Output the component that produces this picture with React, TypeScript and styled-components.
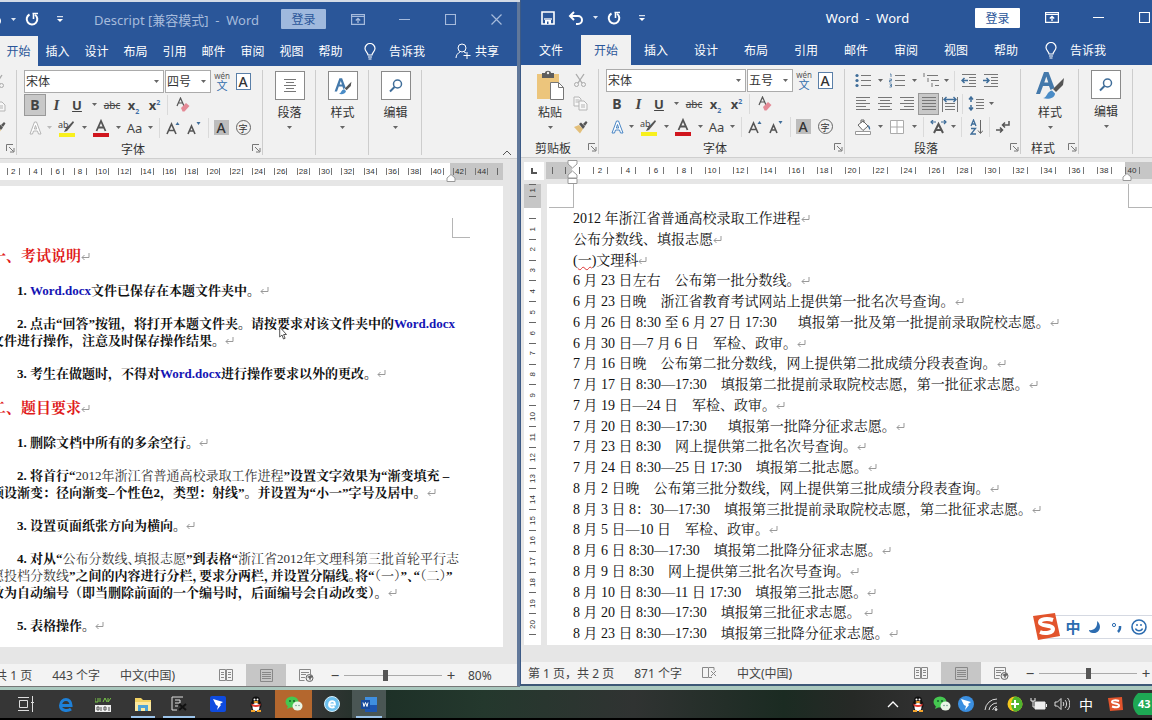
import React from "react";
import styled, { createGlobalStyle, css } from "styled-components";

const BLUE = "#2a5699";
const UI = `"Noto Sans", "Noto Sans CJK SC", sans-serif`;
const DOC = `"Liberation Serif", "Noto Serif CJK SC", "Noto Sans CJK SC", serif`;

const Global = createGlobalStyle`
  * { box-sizing: border-box; }
  html, body { margin: 0; height: 100%; overflow: hidden; }
  body { font-family: ${UI}; font-size: 12px; color: #333; background: #8fa7a0; }
  button, select, input { font: inherit; color: inherit; margin: 0; padding: 0; border: 0; background: none; }
  svg { display: block; flex: none; }
`;

/* ---------- page frame ---------- */
const Screen = styled.div`
  height: 100vh;
  display: flex;
  flex-direction: column;
`;
const Desktop = styled.main`
  flex: 1;
  min-height: 0;
  display: grid;
  grid-template-columns: 520fr 632fr;
  background: linear-gradient(#d3dbe6, #d3dbe6 50%, #a9c7bd);
`;
const Window = styled.section<{ $back?: boolean }>`
  position: relative;
  min-width: 0;
  overflow: hidden;
  ${(p) =>
    p.$back
      ? css`
          margin: 2px 0 1px;
          border-right: 3px solid #61789a;
          border-bottom: 1px solid #777;
        `
      : css`
          margin-bottom: 2px;
          border-left: 1px solid #3c5a86;
          border-bottom: 2px solid #3d5877;
        `}
`;
const Frame = styled.div<{ $offset: number }>`
  height: 100%;
  margin-left: ${(p) => -p.$offset}px;
  display: flex;
  flex-direction: column;
  background: #e6e6e6;
`;

/* ---------- title bar and tabs ---------- */
const TitleBar = styled.header<{ $h: number; $dim?: boolean }>`
  height: ${(p) => p.$h}px;
  flex: none;
  display: flex;
  align-items: center;
  background: ${BLUE};
  color: ${(p) => (p.$dim ? "#a6bbdc" : "#fff")};
`;
const Quick = styled.div`
  display: flex;
  align-items: center;
  padding-left: 16px;
  color: #fff;
`;
const Cell = styled.button<{ $w: number; $on?: boolean }>`
  width: ${(p) => p.$w}px;
  height: 22px;
  flex: none;
  display: flex;
  align-items: center;
  justify-content: center;
  ${(p) => p.$on && "background: #c8c8c8; box-shadow: inset 0 0 0 1px #999;"}
`;
const Title = styled.h1<{ $lead: number }>`
  flex: 1;
  margin: 0;
  padding-left: ${(p) => p.$lead}px;
  font-size: 13px;
  font-weight: 400;
  text-align: center;
  white-space: pre;
`;
const Controls = styled.div<{ $over: number }>`
  display: flex;
  align-items: center;
  flex: none;
  margin-right: ${(p) => -p.$over}px;
`;
const Login = styled.button<{ $dim?: boolean }>`
  width: 45px;
  height: 20px;
  margin-right: 9px;
  border-radius: 1px;
  background: ${(p) => (p.$dim ? "#9fb9de" : "#fff")};
  color: ${BLUE};
`;
const Tabs = styled.nav`
  height: 30px;
  flex: none;
  display: flex;
  background: ${BLUE};
  color: #fff;
`;
const Tab = styled.button<{ $w: number; $on?: boolean }>`
  width: ${(p) => p.$w}px;
  flex: none;
  white-space: nowrap;
  ${(p) => p.$on && `background: #f1f1f1; color: ${BLUE};`}
`;
const Tell = styled.button`
  display: flex;
  align-items: center;
  gap: 13px;
  padding: 0 14px;
  white-space: nowrap;
`;
const Share = styled(Tell)`
  gap: 4px;
  margin-left: auto;
  padding: 0 18px 0 0;
`;

/* ---------- ribbon ---------- */
const Ribbon = styled.div`
  height: 93px;
  flex: none;
  display: flex;
  background: #f1f1f1;
  border-bottom: 1px solid #cfcfcf;
`;
const Group = styled.div<{ $w: number }>`
  width: ${(p) => p.$w}px;
  flex: none;
  display: flex;
  flex-direction: column;
  padding-top: 4px;
  background: linear-gradient(#cdcdcd, #cdcdcd) right 4px / 1px 85px no-repeat;
`;
const GroupBody = styled.div<{ $pad?: number }>`
  height: 69px;
  display: flex;
  padding-left: ${(p) => p.$pad ?? 0}px;
`;
const GroupLabel = styled.div`
  height: 19px;
  display: flex;
  align-items: center;
  span {
    flex: 1;
    text-align: center;
    white-space: nowrap;
  }
`;
const Rows = styled.div`
  display: flex;
  flex-direction: column;
`;
const Row = styled.div`
  height: 23px;
  display: flex;
  align-items: center;
  color: #444;
`;
const Sep = styled.i<{ $w: number }>`
  width: ${(p) => p.$w}px;
  height: 20px;
  background: linear-gradient(#dadada, #dadada) center / 1px 100% no-repeat;
`;
const Combo = styled.label<{ $w: number }>`
  position: relative;
  width: ${(p) => p.$w}px;
  height: 23px;
  margin-right: 1px;
  border: 1px solid #ababab;
  background: #fff;
  select {
    appearance: none;
    width: 100%;
    height: 21px;
    padding-left: 1px;
    color: #333;
  }
  svg {
    position: absolute;
    right: 4px;
    top: 9px;
    pointer-events: none;
  }
`;
const Big = styled.button<{ $w: number }>`
  width: ${(p) => p.$w}px;
  display: flex;
  flex-direction: column;
  align-items: center;
  gap: 5px;
  padding-top: 1px;
  line-height: 16px;
  color: #333;
`;
const Glyph = styled.span<{ $size: number; $bold?: boolean; $italic?: boolean; $serif?: boolean; $line?: string }>`
  font-size: ${(p) => p.$size}px;
  line-height: 18px;
  font-weight: ${(p) => (p.$bold ? 700 : 400)};
  font-style: ${(p) => (p.$italic ? "italic" : "normal")};
  font-family: ${(p) => (p.$serif ? `"Liberation Serif", serif` : `"Noto Sans", sans-serif`)};
  text-decoration: ${(p) => p.$line ?? "none"};
  sub, sup { font-size: 7px; line-height: 0; color: #3f6fa8; }
`;
const BoxIcon = styled.span`
  width: 30px;
  height: 29px;
  display: grid;
  place-items: center;
  border: 1px solid #8a8a8a;
  background: #fff;
`;
const Collapse = styled.button`
  margin: auto 5px 2px auto;
`;

/* ---------- rulers ---------- */
const RulerRow = styled.div<{ $below: number }>`
  flex: none;
  display: flex;
  margin: 4px 0 ${(p) => p.$below}px;
`;
const Ruler = styled.div<{ $dark: number }>`
  position: relative;
  height: 17px;
  flex: 1;
  min-width: 0;
  display: flex;
  background: linear-gradient(to left, #c6c6c6 ${(p) => p.$dark}px, #fff ${(p) => p.$dark}px);
  font: 8px "Liberation Sans", sans-serif;
  color: #333;
`;
const Mark = styled.div<{ $w?: number }>`
  ${(p) => (p.$w ? `flex: none; width: ${p.$w}px;` : "flex: 1;")}
  display: flex;
  align-items: center;
  justify-content: center;
  gap: ${(p) => (p.$w ? 2 : 1)}px;
  &::before, &::after {
    content: "";
    width: 1px;
    height: 7px;
    background: #777;
  }
  span { min-width: 9px; text-align: center; }
`;
const Tick = styled.i`
  flex: 1;
  align-self: center;
  height: 7px;
  background: linear-gradient(#666, #666) center / 1px 100% no-repeat;
`;
const RulerHead = styled.div<{ $w: number; $dark?: boolean }>`
  width: ${(p) => p.$w}px;
  flex: none;
  display: flex;
  background: ${(p) => (p.$dark ? "#c6c6c6" : "transparent")};
`;
const Stop = styled.span<{ $side: "left" | "right"; $at: number; $y: number }>`
  position: absolute;
  ${(p) => p.$side}: ${(p) => p.$at}px;
  top: ${(p) => p.$y}px;
`;
const TabStop = styled.button`
  width: 20px;
  height: 18px;
  margin: 0 2px 0 3px;
  display: grid;
  place-items: center;
  background: #fff;
`;
const VRuler = styled.div`
  width: 17px;
  flex: none;
  margin: 0 6px 0 3px;
  display: flex;
  flex-direction: column;
  overflow: hidden;
  background: linear-gradient(#c6c6c6 24px, #fff 24px);
  font: 8px/17px "Liberation Sans", sans-serif;
  color: #333;
`;
const VMark = styled.div<{ $h?: number }>`
  ${(p) => (p.$h ? `flex: none; height: ${p.$h}px;` : "flex: 1; min-height: 0;")}
  display: flex;
  flex-direction: column;
  align-items: center;
  justify-content: space-between;
  &::before {
    content: "";
    width: 7px;
    height: 1px;
    background: #666;
  }
  span {
    writing-mode: vertical-rl;
    transform: rotate(180deg);
    line-height: 12px;
    margin: auto;
  }
`;

/* ---------- documents ---------- */
const Work = styled.div`
  flex: 1;
  min-height: 0;
  display: flex;
  overflow: hidden;
`;
const Page = styled.article<{ $gutter: number }>`
  flex: 1;
  min-width: 0;
  margin-right: ${(p) => p.$gutter}px;
  display: flex;
  flex-direction: column;
  overflow: hidden;
  background: #fff;
  font-family: ${DOC};
  color: #111;
`;
const Corners = styled.div<{ $h: number; $end: number; $both?: boolean }>`
  height: ${(p) => p.$h}px;
  flex: none;
  display: flex;
  align-items: flex-end;
  justify-content: ${(p) => (p.$both ? "space-between" : "flex-end")};
  padding: 0 ${(p) => p.$end}px 0 2px;
`;
const Corner = styled.i<{ $w: number; $h: number; $edge: "left" | "right" }>`
  width: ${(p) => p.$w}px;
  height: ${(p) => p.$h}px;
  border: 0 solid #b5b5b5;
  border-bottom-width: 1px;
  border-${(p) => p.$edge}-width: 1px;
`;
const Brief = styled.div`
  padding: 8px 0 0 52px;
  font-size: 13px;
  line-height: 17px;
  font-weight: 700;
  white-space: pre;
  h2 {
    margin: 0 0 16px;
    font-size: 15px;
    line-height: 20px;
    color: #e01b1b;
  }
  p { margin: 0 0 16px; text-indent: 26px; }
  b { color: #1414b4; }
  em { font-style: normal; font-weight: 400; color: #333; }
`;
const Tight = styled.span`
  font-feature-settings: "halt";
`;
const Schedule = styled.div`
  flex: 1;
  min-height: 0;
  padding: 1px 0 0 26px;
  display: grid;
  grid-auto-rows: 1fr;
  font-size: 14px;
  line-height: 20px;
  white-space: pre;
  p { margin: 0; min-height: 0; }
  u { text-decoration: underline wavy #d33 1px; }
`;
const Return = styled.svg`
  display: inline-block;
`;

/* ---------- status bar ---------- */
const Status = styled.footer`
  height: 22px;
  flex: none;
  margin-top: 17px;
  display: flex;
  align-items: center;
  padding-left: 7px;
  background: #f3f3f3;
  color: #444;
  white-space: nowrap;
`;
const Info = styled.span`
  margin-right: 20px;
`;
const Views = styled.div`
  display: flex;
  margin-left: auto;
`;
const View = styled.button<{ $on?: boolean }>`
  width: 40px;
  height: 22px;
  display: grid;
  place-items: center;
  background: ${(p) => (p.$on ? "#c6c6c6" : "transparent")};
`;
const Zoom = styled.div<{ $tail: number }>`
  display: flex;
  align-items: center;
  margin-right: ${(p) => p.$tail}px;
  button { width: 18px; font-size: 15px; line-height: 20px; }
  input {
    appearance: none;
    width: 98px;
    height: 20px;
    background: linear-gradient(#aaa, #aaa) center / 100% 1px no-repeat;
  }
  input::-webkit-slider-thumb {
    appearance: none;
    width: 5px;
    height: 11px;
    background: #555;
  }
  output { width: 50px; padding-left: 8px; }
`;

/* ---------- taskbar and overlays ---------- */
const Taskbar = styled.footer`
  height: 32px;
  flex: none;
  display: flex;
  align-items: stretch;
  border-top: 2px solid #a9c7bd;
  border-bottom: 2px solid #000;
  background: linear-gradient(to right, #363636 27%, #1d3027 33%, #24382d 42%, #303332 55%, #1b2b22 68%, #262926 74%, #303030 80%);
`;
const Task = styled.button<{ $w: number; $open?: boolean; $bg?: string }>`
  width: ${(p) => p.$w}px;
  height: 28px;
  flex: none;
  display: grid;
  place-items: center;
  background: ${(p) => p.$bg ?? "transparent"};
  ${(p) => p.$open && "background-image: linear-gradient(#9cc4ea, #9cc4ea); background-size: calc(100% - 8px) 2px; background-position: center bottom; background-repeat: no-repeat;"}
`;
const Tray = styled.div`
  display: flex;
  margin-left: auto;
  color: #fff;
  font-size: 14px;
`;
const ImeBar = styled.div`
  position: absolute;
  right: 0;
  bottom: 45px;
  display: flex;
  align-items: center;
  width: 108px;
  height: 24px;
  padding-left: 17px;
  background: #fff;
  border: 1px solid #d5d9e2;
  border-right: 0;
  color: #2c6cb0;
  button { width: 22px; display: grid; place-items: center; font-size: 15px; line-height: 22px; font-weight: 700; }
  > svg { position: absolute; left: -14px; top: -4px; }
`;
const Pointer = styled.svg`
  position: absolute;
  left: 279px;
  top: 324px;
`;

/* ---------- drawings ---------- */
type SvgP = { w?: number; h?: number; box?: string; children: React.ReactNode; c?: string };
const Ico = ({ w = 16, h = 16, box, c = "currentColor", children }: SvgP) => (
  <svg width={w} height={h} viewBox={box ?? `0 0 ${w} ${h}`} fill="none" stroke={c} aria-hidden="true">
    {children}
  </svg>
);
const Caret = ({ c = "#666" }: { c?: string }) => (
  <svg width="5" height="3" aria-hidden="true"><path d="M0 0h5L2.500 3z" fill={c} /></svg>
);
const Launcher = () => (
  <Cell $w={14} aria-label="更多选项">
    <Ico w={9} h={9} c="#777"><path d="M.5 7V.5H7M3 3l4.500 4.500M8 4v4H4" /></Ico>
  </Cell>
);
const SaveIcon = () => (
  <Ico w={14} h={14}><path d="M1 1h12v12H1z" strokeWidth="1.600" /><path d="M3 8h8" strokeWidth="1.300" /><path d="M4 9h6v4H4z" fill="currentColor" stroke="none" /><path d="M6 10.500h1.500V13H6z" fill={BLUE} stroke="none" /></Ico>
);
const UndoIcon = () => (
  <Ico w={16} h={14} c="currentColor"><path d="M6 1L2 5l4 4M2.500 5H10a4 4 0 010 8H8" strokeWidth="2" /></Ico>
);
const RedoIcon = () => (
  <Ico w={14} h={14}><path d="M4.500 2.500A5.300 5.300 0 1010 2.800" strokeWidth="2" /><path d="M7.500 1.500H13M8.500 1.500V7" strokeWidth="1.600" /></Ico>
);
const CustomIcon = () => (
  <Ico w={6} h={6}><path d="M0 .7h6" /><path d="M0 3h6L3 6z" fill="currentColor" stroke="none" /></Ico>
);
const RibbonIcon = () => (
  <Ico w={14} h={11}><path d="M.6.600h12.800v9.800H.6zM.6 2.500h12.800" strokeWidth="1.200" /><path d="M7 9V4.500M4.800 6.500L7 4.300l2.200 2.200" strokeWidth="1.300" /></Ico>
);
const Bulb = () => (
  <Ico w={12} h={17}><path d="M4 12c0-2.500-3-3.500-3-6.500a5 5 0 0110 0c0 3-3 4-3 6.500zM4 14h4M4.500 16h3" strokeWidth="1.200" /></Ico>
);
const ShareIcon = () => (
  <Ico w={16} h={16}><circle cx="7" cy="5" r="4" /><path d="M1 15c0-3 2-5 4-6M9 9l2 1M12 9v7M8.500 12.500h7" /></Ico>
);
const Scissors = () => (
  <Ico w={14} h={15} c="#aaa"><path d="M3 1l6 9M11 1L5 10" strokeWidth="1.300" /><circle cx="3.500" cy="11.500" r="2" /><circle cx="10.500" cy="11.500" r="2" /></Ico>
);
const CopyIcon = () => (
  <Ico w={15} h={15} c="#b5b5b5"><path d="M1 1h5l2 2v7H1zM2.500 4h4M2.500 6h4" fill="#f8f8f8" /><path d="M6 5h5l3 3v6H6z" fill="#f8f8f8" /><path d="M8 9h4M8 11h4" /></Ico>
);
const Painter = () => (
  <Ico w={15} h={14} c="none"><path d="M1 7l5-2 4 4-3 4.500z" fill="#e3bf7a" /><path d="M6 4l2-1.500 4 4L10 9z" fill="#555" /><path d="M10 4l3-3 1.500 1.500L12 6z" fill="#555" /></Ico>
);
const PasteIcon = () => (
  <Ico w={28} h={30} c="none">
    <path d="M1 4h22v25H1z" fill="#ecc57c" /><path d="M6 3h3c0-3 6-3 6 0h3v5H6z" fill="#5d5d5d" /><circle cx="12" cy="3" r="1.200" fill="#eee" />
    <path d="M14.500 12.500h8l5 5v12h-13z" fill="#fff" stroke="#777" /><path d="M22.500 12.500v5h5" stroke="#777" />
  </Ico>
);
const StyleIcon = ({ s = 1 }: { s?: number }) => (
  <Ico w={30 * s} h={30 * s} box="0 0 30 30" c="none">
    <path d="M1 24L9 2h4.500l6 16-4 2-1.500-4H8l-3 8zM9.300 12.500h4L11.300 6.500z" fill="#4479ab" fillRule="evenodd" />
    <path d="M29 8l-1 7-7 7-3-3z" fill="#555" /><path d="M8 28c4 0 4-7 9-7.500l3 3C20 28 13 30 8 28z" fill="#4a8cc7" />
  </Ico>
);
const Search = () => (
  <Ico w={14} h={14} c="#3f6d99"><circle cx="8.500" cy="5" r="4" strokeWidth="1.500" /><path d="M5.500 8L1 12.500" strokeWidth="2" /></Ico>
);
const Lines = ({ rows, c = "#777" }: { rows: [number, number][]; c?: string }) => (
  <Ico w={16} h={15} c={c}>{rows.map(([a, b], i) => <path key={i} d={`M${a} ${i * 3 + 1.5}H${b}`} />)}</Ico>
);
const ListIcon = ({ kind }: { kind: "dot" | "num" | "multi" }) => (
  <Ico w={17} h={15} c="#777">
    {kind === "multi" ? (
      <path d="M4 2.500h11M8 7.500h8M12 12.500h4M1 0v4M5 5v4M9 10v4" />
    ) : (
      <path d="M6 2.500h10M6 7.500h10M6 12.500h10" />
    )}
    {kind === "dot" && [2.5, 7.5, 12.5].map((y) => <circle key={y} cx="2" cy={y} r="1.600" fill="#3f6d99" stroke="none" />)}
    {kind === "num" && <path d="M1 1h1v3M.5 6h2v1.500h-2V9h2M.5 11h2v3h-2M1 12.500h1" stroke="#3f6d99" strokeWidth=".8" />}
  </Ico>
);
const IndentIcon = ({ out }: { out?: boolean }) => (
  <Ico w={16} h={15} c="#777"><path d="M1 1.500h14M8 4.500h7M8 7.500h7M8 10.500h7M1 13.500h14" /><path d={out ? "M7 7.500H1M3.500 5L1 7.500 3.500 10" : "M0 7.500h6M3.500 5L6 7.500 3.500 10"} stroke="#3f6d99" strokeWidth="1.500" /></Ico>
);
const DistIcon = () => (
  <Ico w={16} h={16} c="#777"><path d="M3 7.500h10M3 10.500h10M3 13.500h10M.5 1v15M15.500 1v15" /><path d="M2 3.500h12M4.500 1L2 3.500 4.500 6M11.500 1L14 3.500 11.500 6" stroke="#3f6d99" strokeWidth="1.400" /></Ico>
);
const SpacingIcon = () => (
  <Ico w={16} h={15} c="#777"><path d="M8 3.500h8M8 6.500h8M8 9.500h8M8 12.500h8" /><path d="M3 1v5M1 3.500L3 1l2 2.500M3 9v5M1 11.500L3 14l2-2.500" stroke="#3f6d99" strokeWidth="1.500" /></Ico>
);
const ShadeIcon = () => (
  <Ico w={17} h={16} c="#666"><path d="M3 6l5-4 5 5-5 4.500zM6 4V1h3v3" fill="#fff" /><path d="M13 6c2 1 2.500 3 2 5-1-1-2-2-2-5z" fill="#3f6d99" stroke="none" /><path d="M.5 12.500h15v3H.5z" fill="#fff" stroke="#999" /></Ico>
);
const BorderIcon = () => (
  <Ico w={14} h={14} c="#aaa"><path d="M.5.500h13v13H.5zM7 .5v13M.5 7h13" fill="#fff" /></Ico>
);
const AsianIcon = () => (
  <Ico w={17} h={14} c="#555"><path d="M4 13l4.500-9 4.500 9M6 10h5" strokeWidth="2" /><path d="M6 2H1M3 0L1 2l2 2M11 2h5M14 0l2 2-2 2" stroke="#3f6d99" strokeWidth="1.200" /></Ico>
);
const SortIcon = () => (
  <Ico w={13} h={16} c="#3f6d99"><path d="M1 7l2.500-6L6 7M2 5h3M1 9.500h4.500L1 15h5" strokeWidth="1.300" /><path d="M10.500 1v13M8 11.500l2.500 3 2.500-3" stroke="#666" /></Ico>
);
const MarksIcon = () => (
  <Ico w={14} h={13} c="#555"><path d="M13 1v4H7M9 2.500L6.500 5 9 7.500M0 10h6M4 7.500L6.500 10 4 12.500" strokeWidth="1.500" /></Ico>
);
const Eraser = () => (
  <Ico w={14} h={15} c="#555"><path d="M1 9l3.500-8L8 9M2.300 6h4.500" strokeWidth="1.200" /><path d="M5 11l5-5 3.500 3-5 5.500H6.500z" fill="#e48a96" stroke="none" /></Ico>
);
const OutlineA = ({ c }: { c: string }) => (
  <Ico w={13} h={14} c={c}><path d="M1 13L5.500 1h2L12 13H9.500l-1-3h-4l-1 3zM5.300 8h2.400L6.500 4.500z" fill="#fff" /></Ico>
);
const Highlighter = () => (
  <svg width="18" height="18" aria-hidden="true"><text x="0" y="9" fontSize="9" fontFamily="Noto Sans" fill="#444">ab</text><path d="M15 2l1 1.500L9 12l-3 1 1.500-3z" fill="#555" /><path d="M1 14h16v4H1z" fill="#f8f01d" /></svg>
);
const ColorA = () => (
  <svg width="16" height="18" aria-hidden="true"><path d="M3.500 12L8 2l4.500 10M5.500 8.500h5" fill="none" stroke="#555" strokeWidth="1.800" /><path d="M0 14h16v4H0z" fill="#d0161e" /></svg>
);
const SizeA = ({ up }: { up?: boolean }) => (
  <Ico w={14} h={14} c="#555"><path d={up ? "M1 13L5.500 3 10 13M2.800 9.500h5.500" : "M1 13l3.500-8L8 13M2.500 10h4"} strokeWidth="1.600" /><path d={up ? "M9.500 4L11.500 1l2 3z" : "M9.500 1h4l-2 3z"} fill="#3f6d99" stroke="none" /></Ico>
);
const PinyinMark = styled.span`
  display: grid;
  justify-items: center;
  font-size: 8px;
  line-height: 8px;
  color: #555;
  b {
    font-size: 11px;
    line-height: 12px;
    font-weight: 400;
    color: #2f6cab;
  }
`;
const CharBox = styled.span<{ $kind: "border" | "shade" | "ring" }>`
  display: grid;
  place-items: center;
  width: 15px;
  height: ${(p) => (p.$kind === "border" ? 17 : 15)}px;
  line-height: 15px;
  font-size: ${(p) => (p.$kind === "ring" ? 9 : 14)}px;
  font-weight: ${(p) => (p.$kind === "ring" ? 400 : 500)};
  color: #333;
  ${(p) => p.$kind === "border" && "border: 1px solid #5a7fa8; background: #fff;"}
  ${(p) => p.$kind === "shade" && "background: #bdbdbd;"}
  ${(p) => p.$kind === "ring" && "border: 1px solid #666; border-radius: 50%;"}
`;
const Cr = () => (
  <Return width="9" height="8" fill="none" stroke="#999" aria-hidden="true"><path d="M8 0v4.500H1M3.500 2L1 4.500 3.500 7" /></Return>
);

/* ---------- ribbon groups ---------- */
const FontGroup = ({ bold }: { bold?: boolean }) => (
  <Group $w={246}>
    <GroupBody $pad={7}>
      <Rows>
        <Row>
          <Combo $w={140}><select aria-label="字体"><option>宋体</option></select><Caret /></Combo>
          <Combo $w={46}><select aria-label="字号"><option>{bold ? "四号" : "五号"}</option></select><Caret /></Combo>
          <Cell $w={20} aria-label="拼音指南"><PinyinMark>wén<b>文</b></PinyinMark></Cell>
          <Cell $w={22} aria-label="字符边框"><CharBox $kind="border">A</CharBox></Cell>
        </Row>
        <Row>
          <Cell $w={22} $on={bold}><Glyph $size={14} $bold>B</Glyph></Cell>
          <Cell $w={21}><Glyph $size={15} $bold $italic $serif>I</Glyph></Cell>
          <Cell $w={20}><Glyph $size={13} $bold $line="underline">U</Glyph></Cell>
          <Cell $w={14} aria-label="下划线样式"><Caret /></Cell>
          <Cell $w={22}><Glyph $size={10} $line="line-through">abc</Glyph></Cell>
          <Cell $w={21}><Glyph $size={13} $bold>x<sub>2</sub></Glyph></Cell>
          <Cell $w={21}><Glyph $size={13} $bold>x<sup>2</sup></Glyph></Cell>
          <Sep $w={4} />
          <Cell $w={28} aria-label="清除格式"><Eraser /></Cell>
        </Row>
        <Row>
          <Cell $w={22} aria-label="文本效果"><OutlineA c={bold ? "#b5b5b5" : "#4a86c5"} /></Cell>
          <Cell $w={7} aria-label="文本效果选项"><Caret c={bold ? "#bbb" : "#666"} /></Cell>
          <Cell $w={28} aria-label="突出显示"><Highlighter /></Cell>
          <Cell $w={7} aria-label="突出显示颜色"><Caret /></Cell>
          <Cell $w={26} aria-label="字体颜色"><ColorA /></Cell>
          <Cell $w={8} aria-label="更多颜色"><Caret /></Cell>
          <Cell $w={25}><Glyph $size={13}>Aa</Glyph></Cell>
          <Cell $w={7} aria-label="更改大小写"><Caret /></Cell>
          <Sep $w={10} />
          <Cell $w={18} aria-label="增大字号"><SizeA up /></Cell>
          <Cell $w={24} aria-label="减小字号"><SizeA /></Cell>
          <Sep $w={4} />
          <Cell $w={22} aria-label="字符底纹"><CharBox $kind="shade">A</CharBox></Cell>
          <Cell $w={22} aria-label="带圈字符"><CharBox $kind="ring">字</CharBox></Cell>
        </Row>
      </Rows>
    </GroupBody>
    <GroupLabel><span>字体</span><Launcher /></GroupLabel>
  </Group>
);

const ClipboardGroup = () => (
  <Group $w={78}>
    <GroupBody $pad={8}>
      <Big $w={42}><PasteIcon />粘贴<Caret /></Big>
      <Rows>
        <Row><Cell $w={18} aria-label="剪切"><Scissors /></Cell></Row>
        <Row><Cell $w={18} aria-label="复制"><CopyIcon /></Cell></Row>
        <Row><Cell $w={18} aria-label="格式刷"><Painter /></Cell></Row>
      </Rows>
    </GroupBody>
    <GroupLabel><span>剪贴板</span><Launcher /></GroupLabel>
  </Group>
);

const F: [number, number] = [1, 15];
const ParagraphGroup = () => (
  <Group $w={176}>
    <GroupBody $pad={7}>
      <Rows>
        <Row>
          <Cell $w={22} aria-label="项目符号"><ListIcon kind="dot" /></Cell><Cell $w={12} aria-label="项目符号库"><Caret /></Cell>
          <Cell $w={22} aria-label="编号"><ListIcon kind="num" /></Cell><Cell $w={12} aria-label="编号库"><Caret /></Cell>
          <Cell $w={22} aria-label="多级列表"><ListIcon kind="multi" /></Cell><Cell $w={8} aria-label="列表库"><Caret /></Cell>
          <Sep $w={9} />
          <Cell $w={20} aria-label="减少缩进"><IndentIcon out /></Cell><Cell $w={24} aria-label="增加缩进"><IndentIcon /></Cell>
        </Row>
        <Row>
          <Cell $w={22} aria-label="左对齐"><Lines rows={[F, [1, 11], F, [1, 11], F]} /></Cell>
          <Cell $w={22} aria-label="居中"><Lines rows={[F, [3, 13], F, [3, 13], F]} /></Cell>
          <Cell $w={22} aria-label="右对齐"><Lines rows={[F, [5, 15], F, [5, 15], F]} /></Cell>
          <Cell $w={21} $on aria-label="两端对齐"><Lines rows={[F, F, F, F, F]} /></Cell>
          <Cell $w={21} aria-label="分散对齐"><DistIcon /></Cell>
          <Sep $w={5} />
          <Cell $w={22} aria-label="行距"><SpacingIcon /></Cell><Cell $w={8} aria-label="行距选项"><Caret /></Cell>
        </Row>
        <Row>
          <Cell $w={22} aria-label="底纹"><ShadeIcon /></Cell><Cell $w={12} aria-label="底纹颜色"><Caret /></Cell>
          <Cell $w={22} aria-label="边框"><BorderIcon /></Cell><Cell $w={12} aria-label="边框选项"><Caret /></Cell>
          <Sep $w={7} />
          <Cell $w={22} aria-label="中文版式"><AsianIcon /></Cell><Cell $w={8} aria-label="版式选项"><Caret /></Cell>
          <Sep $w={8} />
          <Cell $w={22} aria-label="排序"><SortIcon /></Cell>
          <Sep $w={4} />
          <Cell $w={24} aria-label="显示编辑标记"><MarksIcon /></Cell>
        </Row>
      </Rows>
    </GroupBody>
    <GroupLabel><span>段落</span><Launcher /></GroupLabel>
  </Group>
);

const Boxed = ({ label, w, children }: { label: string; w: number; children: React.ReactNode }) => (
  <Group $w={w}>
    <GroupBody><Big $w={w}><BoxIcon>{children}</BoxIcon>{label}<Caret /></Big></GroupBody>
  </Group>
);

const Numbers = ({ to, w }: { to: number; w?: number }) => (
  <>
    {Array.from({ length: to / 2 }, (_, i) => (
      <Mark key={i} $w={w}><span>{i * 2 + 2}</span></Mark>
    ))}
  </>
);
const RightStop = () => (
  <svg width="10" height="8" fill="#fff" stroke="#999" aria-hidden="true"><path d="M1 7.500V4l4-3.500L9 4v3.500z" /></svg>
);

/* ---------- status parts ---------- */
const ReadIcon = () => (
  <Ico w={14} h={12} c="#888"><path d="M.5.500h6v11h-6zM7.500.500h6v11h-6zM2 3.500h3M2 5.500h3M2 8.500h3M9 3.500h3M9 5.500h3M9 8.500h3" /></Ico>
);
const PrintIcon = () => (
  <Ico w={13} h={13} c="#888"><path d="M.5.500h12v12H.5zM2 3.500h9M2 5.500h9M2 7.500h9M2 9.500h9" /></Ico>
);
const WebIcon = () => (
  <Ico w={15} h={13} c="#888"><path d="M.5.500h11v5M.5.500v11h5M2 3.500h8M2 5.500h5M2 8.500h4" /><circle cx="10.500" cy="9" r="3.500" fill="#eee" stroke="#666" /><path d="M8 8l2 1 1 3 1-3 2-1-2-2z" fill="#666" stroke="none" /></Ico>
);
const ProofIcon = () => (
  <Ico w={15} h={12} c="#888"><path d="M.5.500h6v10h-6zM7 .5h5v3M7 10.500h3M9 4l5 5M14 4L9 9" /></Ico>
);
const ViewTools = ({ value, tail, percent }: { value: number; tail: number; percent?: string }) => (
  <>
    <Views>
      <View aria-label="阅读视图"><ReadIcon /></View>
      <View $on aria-label="页面视图"><PrintIcon /></View>
      <View aria-label="Web 版式视图"><WebIcon /></View>
    </Views>
    <Zoom $tail={tail}>
      <button>−</button>
      <input type="range" aria-label="显示比例" min={0} max={100} defaultValue={value} />
      <button>+</button>
      {percent && <output>{percent}</output>}
    </Zoom>
  </>
);

const QuickTools = () => (
  <Quick>
    <Cell $w={22} aria-label="保存"><SaveIcon /></Cell>
    <Cell $w={34} aria-label="撤消"><UndoIcon /></Cell>
    <Caret c="#dfe7f3" />
    <Cell $w={32} aria-label="重复"><RedoIcon /></Cell>
    <Cell $w={24} aria-label="自定义快速访问工具栏"><CustomIcon /></Cell>
  </Quick>
);
const WindowTools = ({ over, dim }: { over: number; dim?: boolean }) => (
  <Controls $over={over}>
    <Login $dim={dim}>登录</Login>
    <Cell $w={46} aria-label="功能区显示选项"><RibbonIcon /></Cell>
    <Cell $w={46} aria-label="最小化"><Ico w={11} h={11}><path d="M0 5.500h11" /></Ico></Cell>
    <Cell $w={46} aria-label="最大化"><Ico w={11} h={11}><path d="M.5.500h10v10H.5z" strokeWidth="1.200" /></Ico></Cell>
    {dim && <Cell $w={46} aria-label="关闭"><Ico w={11} h={11}><path d="M.5.500l10 10M10.500.500l-10 10" strokeWidth="1.200" /></Ico></Cell>}
  </Controls>
);
const TABS = ["插入", "设计", "布局", "引用", "邮件", "审阅", "视图", "帮助"];

const SCHEDULE = [
  "6 月 23 日左右　公布第一批分数线。",
  "6 月 23 日晚　浙江省教育考试网站上提供第一批名次号查询。",
  "6 月 26 日 8:30 至 6 月 27 日 17:30　  填报第一批及第一批提前录取院校志愿。",
  "6 月 30 日—7 月 6 日　军检、政审。",
  "7 月 16 日晚　公布第二批分数线，网上提供第二批成绩分段表查询。",
  "7 月 17 日 8:30—17:30　填报第二批提前录取院校志愿，第一批征求志愿。",
  "7 月 19 日—24 日　军检、政审。",
  "7 月 20 日 8:30—17:30　  填报第一批降分征求志愿。",
  "7 月 23 日 8:30　网上提供第二批名次号查询。",
  "7 月 24 日 8:30—25 日 17:30　填报第二批志愿。",
  "8 月 2 日晚　公布第三批分数线，网上提供第三批成绩分段表查询。",
  "8 月 3 日 8：30—17:30　填报第三批提前录取院校志愿，第二批征求志愿。",
  "8 月 5 日—10 日　军检、政审。",
  "8 月 6 日 8:30—17:30　填报第二批降分征求志愿。",
  "8 月 9 日 8:30　网上提供第三批名次号查询。",
  "8 月 10 日 8:30—11 日 17:30　填报第三批志愿。",
  "8 月 20 日 8:30—17:30　填报第三批征求志愿。 ",
  "8 月 23 日 8:30—17:30　填报第三批降分征求志愿。",
];

const LeftWindow = () => (
  <Window $back>
    <Frame $offset={61}>
      <TitleBar $h={34} $dim>
        <QuickTools />
        <Title $lead={0}>{"Descript [兼容模式]  -  Word"}</Title>
        <WindowTools over={2} dim />
      </TitleBar>
      <Tabs>
        <Tab $w={60}>文件</Tab>
        <Tab $w={39} $on>开始</Tab>
        {TABS.map((t) => <Tab key={t} $w={39}>{t}</Tab>)}
        <Tell><Bulb />告诉我</Tell>
        <Share><ShareIcon />共享</Share>
      </Tabs>
      <Ribbon>
        <ClipboardGroup />
        <FontGroup bold />
        <Boxed w={53} label="段落"><Lines rows={[[2, 14], [4, 12], [2, 14], [4, 12], [2, 14]]} /></Boxed>
        <Boxed w={53} label="样式"><StyleIcon s={0.6} /></Boxed>
        <Boxed w={53} label="编辑"><Search /></Boxed>
        <Collapse aria-label="折叠功能区"><Ico w={10} h={6} c="#555"><path d="M1 5l4-4 4 4" /></Ico></Collapse>
      </Ribbon>
      <RulerRow $below={6}>
        <Ruler $dark={53}>
          <RulerHead $w={63} />
          <Numbers to={44} />
          <RulerHead $w={10}><Tick /></RulerHead>
          <Stop $side="right" $at={47} $y={11}><RightStop /></Stop>
        </Ruler>
        <RulerHead $w={14} />
      </RulerRow>
      <Work>
        <Page $gutter={14}>
          <Corners $h={52} $end={33}><Corner $w={18} $h={20} $edge="left" /></Corners>
          <Brief>
            <h2>一、考试说明<Cr /></h2>
            <p>1. <b>Word.docx</b>文件已保存在本题文件夹中。<Cr /></p>
            <p>2. 点击“回答”按钮，将打开本题文件夹。请按要求对该文件夹中的<b>Word.docx</b><br />文件进行操作，注意及时保存操作结果。<Cr /></p>
            <p>3. 考生在做题时，不得对<b>Word.docx</b>进行操作要求以外的更改。<Cr /></p>
            <h2>二、题目要求<Cr /></h2>
            <p>1. 删除文档中所有的多余空行。<Cr /></p>
            <p>2. 将首行“<em>2012年浙江省普通高校录取工作进程</em>”设置文字效果为“渐变填充 –<br />预设渐变：径向渐变–个性色2，类型：射线”。并设置为“小一”字号及居中。<Cr /></p>
            <p>3. 设置页面纸张方向为横向。<Cr /></p>
            <p>
              4. 对从“<em>公布分数线<Tight>、</Tight>填报志愿</em>”到表格“<em>浙江省2012年文理科第三批首轮平行志</em><br />
              <Tight><em>愿投档分数线</em>”之间的内容进行分栏，要求分两栏，并设置分隔线。将“<em>（一）</em>”、“<em>（二）</em>”</Tight><br />
              改为自动编号（即当删除前面的一个编号时，后面编号会自动改变）。<Cr />
            </p>
            <p>5. 表格操作。<Cr /></p>
          </Brief>
        </Page>
      </Work>
      <Status>
        <Info>第 1 页，共 1 页</Info><Info>443 个字</Info><Info>中文(中国)</Info>
        <ViewTools value={42} tail={7} percent="80%" />
      </Status>
    </Frame>
    <Pointer width="8" height="14" fill="#fff" stroke="#555" aria-hidden="true"><path d="M.7 1v10l2.300-2 1.500 4 1.600-.7L4.600 8.500h2.900z" /></Pointer>
  </Window>
);

const RightWindow = () => (
  <Window>
    <Frame $offset={0}>
      <TitleBar $h={35}>
        <QuickTools />
        <Title $lead={106}>{"Word  -  Word"}</Title>
        <WindowTools over={15} />
      </TitleBar>
      <Tabs>
        <Tab $w={60}>文件</Tab>
        <Tab $w={50} $on>开始</Tab>
        {TABS.map((t) => <Tab key={t} $w={50}>{t}</Tab>)}
        <Tell><Bulb />告诉我</Tell>
      </Tabs>
      <Ribbon>
        <ClipboardGroup />
        <FontGroup />
        <ParagraphGroup />
        <Group $w={58}>
          <GroupBody><Big $w={58}><StyleIcon />样式<Caret /></Big></GroupBody>
          <GroupLabel><span>样式</span><Launcher /></GroupLabel>
        </Group>
        <Boxed w={54} label="编辑"><Search /></Boxed>
      </Ribbon>
      <RulerRow $below={4}>
        <TabStop aria-label="制表符"><Ico w={6} h={6} c="#555"><path d="M1 0v5h5" strokeWidth="2" /></Ico></TabStop>
        <Ruler $dark={27}>
          <RulerHead $w={26} $dark><Tick /><Tick /></RulerHead>
          <RulerHead $w={14}><Tick /></RulerHead>
          <Numbers to={40} w={28} />
          <Stop $side="left" $at={21} $y={-2}>
            <svg width="11" height="24" fill="#fff" stroke="#999" aria-hidden="true"><path d="M1 .5h9V4L5.500 8 1 4zM1 18v-3l4.500-4 4.500 4v3zM1 18.500h9v5H1z" /></svg>
          </Stop>
          <Stop $side="right" $at={20} $y={11}><RightStop /></Stop>
        </Ruler>
      </RulerRow>
      <Work>
        <VRuler>
          <VMark $h={12}><span>1</span></VMark>
          <VMark $h={22} />
          {Array.from({ length: 20 }, (_, i) => <VMark key={i}><span>{i + 1}</span></VMark>)}
          <VMark $h={11} />
        </VRuler>
        <Page $gutter={0}>
          <Corners $h={24} $end={0} $both>
            <Corner $w={25} $h={24} $edge="right" /><Corner $w={24} $h={24} $edge="left" />
          </Corners>
          <Schedule>
            <p>2012 年浙江省普通高校录取工作进程<Cr /></p>
            <p>公布分数线、填报志愿<Cr /></p>
            <p>(<u>一</u>)文理科<Cr /></p>
            {SCHEDULE.map((line) => <p key={line}>{line}<Cr /></p>)}
          </Schedule>
        </Page>
      </Work>
      <Status>
        <Info>第 1 页，共 2 页</Info><Info>871 个字</Info><Info><ProofIcon /></Info><Info>中文(中国)</Info>
        <ViewTools value={50} tail={-3} />
      </Status>
    </Frame>
    <ImeBar>
      <svg width="30" height="30" aria-hidden="true"><path d="M2 4l22-3 5 23-22 4z" fill="#e2542c" /><path d="M22 8c-6-2-13-1-13 2.500 0 4 13 2 13 6.500 0 4-8 5-13 3" fill="none" stroke="#fff" strokeWidth="4" /></svg>
      <button>中</button>
      <button aria-label="半角"><Ico w={14} h={14} c="none"><path d="M9 1c6 5 2 13-4 12-2 0-4-1-4-3 5 1 9-3 8-9z" fill="#2c6cb0" /></Ico></button>
      <button aria-label="中文标点"><Ico w={12} h={12} c="#2c6cb0"><circle cx="3" cy="4" r="1.600" /><path d="M9 5v2c0 2-1 3-2 4" strokeWidth="2.500" /></Ico></button>
      <button aria-label="表情"><Ico w={16} h={16} c="#2c6cb0"><circle cx="8" cy="8" r="7" strokeWidth="1.600" /><path d="M4.500 9.500c1 3 6 3 7 0M6 5v2M10 5v2" strokeWidth="1.400" /></Ico></button>
    </ImeBar>
  </Window>
);

/* ---------- taskbar icons ---------- */
const Penguin = () => (
  <Ico w={16} h={16} c="none"><ellipse cx="8" cy="9" rx="5.500" ry="6" fill="#111" /><circle cx="8" cy="4.500" r="4" fill="#111" /><ellipse cx="8" cy="11" rx="3.500" ry="4" fill="#fff" /><path d="M3.500 7.500c3 2 6 2 9 0v2c-3 2-6 2-9 0z" fill="#e23a30" /><ellipse cx="8" cy="6" rx="2.500" ry="1" fill="#f3a32b" /><circle cx="6.500" cy="3.500" r="1" fill="#fff" /><circle cx="9.500" cy="3.500" r="1" fill="#fff" /><path d="M3 14h4v2H3zM9 14h4v2H9z" fill="#f3a32b" /></Ico>
);
const WeChat = () => (
  <Ico w={18} h={16} c="none"><ellipse cx="7" cy="6" rx="6.500" ry="5.500" fill="#45c750" /><path d="M3 10l-1 3 4-2z" fill="#45c750" /><ellipse cx="12.500" cy="10" rx="5" ry="4.500" fill="#e9f5e6" /><circle cx="5" cy="5" r="1" fill="#15602a" /><circle cx="9" cy="5" r="1" fill="#15602a" /><circle cx="11" cy="9.500" r=".7" fill="#587" /><circle cx="14" cy="9.500" r=".7" fill="#587" /></Ico>
);
const Wing = ({ round }: { round?: boolean }) => (
  <Ico w={16} h={16} c="none"><rect width="16" height="16" rx={round ? 8 : 2} fill={round ? "#3b8fe0" : "#0e4be0"} /><path d="M3 3l10 3-3 2 1 1-4 5 1-4-2-1z" fill="#fff" /></Ico>
);

const Bottom = () => (
  <Taskbar>
    <Task $w={52} aria-label="任务视图"><Ico w={18} h={16} c="#ddd"><path d="M1 1.500h11M1 14.500h11M2.500 4.500h8v7h-8zM15.500 0v16M14 6.500h3" /></Ico></Task>
    <Task $w={27} aria-label="Edge"><Ico w={15} h={15} c="#1e80d8"><path d="M2.500 8.500h10.500C13 .5 3 .5 2.500 8.500c0 5.500 7 6 10.500 3.500" strokeWidth="3" /></Ico></Task>
    <Task $w={48} aria-label="输入法"><Ico w={16} h={15} c="#7ac94a"><path d="M0 1v4h3V1M5 5V1M8 5l2-4 2 4M13 1v4l3-4" /><path d="M0 8h16v7H0z" fill="#eee" stroke="none" /><path d="M2 10v3h2v-3zM6 10v4M9 10v3h2v-3zM14 10v4" stroke="#555" /></Ico></Task>
    <Task $w={32} $open aria-label="文件资源管理器"><Ico w={16} h={14} c="none"><path d="M0 1h6l2 2h8v11H0z" fill="#f2d264" /><path d="M0 5h16v9H0z" fill="#fbe8a0" /><path d="M3 8h10v6h-3v-3H6v3H3z" fill="#4da3d8" /></Ico></Task>
    <Task $w={40} $open aria-label="录屏"><Ico w={16} h={16} c="#ddd"><path d="M12 1H1v13h5M4 4h5v3H4M4 10h3" /><path d="M8 14l7-6M8 8l7 6" stroke="#111" strokeWidth="2" /></Ico></Task>
    <Task $w={38} aria-label="钉钉"><Wing /></Task>
    <Task $w={38} aria-label="QQ"><Penguin /></Task>
    <Task $w={37} $bg="#b4672e" aria-label="微信"><WeChat /></Task>
    <Task $w={40} aria-label="浏览器"><Ico w={16} h={16} c="none"><circle cx="8" cy="8" r="7.500" fill="#6cc0ee" stroke="#d6eefa" /><path d="M5 8.500h6C11 4 5.500 4 5 8.500c0 3.500 4 3.500 5.500 2" stroke="#fff" strokeWidth="1.800" /></Ico></Task>
    <Task $w={34} $open $bg="#4a5654" aria-label="Word"><Ico w={16} h={15} c="none"><path d="M4 0h12v15H4z" fill="#3f8fe0" /><path d="M4 8h12v7H4z" fill="#1d55b0" /><path d="M0 3h9v9H0z" fill="#174a9c" /><path d="M2 5.500l1 4 1.500-4 1.500 4 1-4" stroke="#fff" /></Ico></Task>
    <Tray>
      <Task $w={24} aria-label="显示隐藏的图标"><Ico w={12} h={7}><path d="M1 6l5-5 5 5" strokeWidth="1.300" /></Ico></Task>
      <Task $w={25} aria-label="QQ"><Penguin /></Task>
      <Task $w={24} aria-label="微信"><WeChat /></Task>
      <Task $w={24} aria-label="钉钉"><Wing round /></Task>
      <Task $w={25} aria-label="网络"><Ico w={14} h={14} c="#ddd"><path d="M1 13A12 12 0 0113 2M5 13a8 8 0 018-7M8.500 13A5 5 0 0113 9.500" /><circle cx="12" cy="12.500" r="1" fill="#ddd" /></Ico></Task>
      <Task $w={23} aria-label="安全卫士"><Ico w={16} h={16} c="none"><circle cx="8" cy="8" r="7.500" fill="#f4c81d" /><path d="M8 .5a7.500 7.500 0 010 15C3 13 3 4 8 .5z" fill="#4fb52e" /><path d="M8 4v8M4 8h8" stroke="#fff" strokeWidth="2" /></Ico></Task>
      <Task $w={24} aria-label="电源"><Ico w={17} h={12} c="#eee"><path d="M5 4h10v7H5z" fill="#eee" /><path d="M16.500 6v3M1 0v3h4V0M3 3v6h2" /></Ico></Task>
      <Task $w={24} aria-label="音量"><Ico w={16} h={14} c="#ddd"><path d="M1 5h2.500L7 1.500v11L3.500 9H1zM9 5c1 1 1 3 0 4M11 3c2 2 2 6 0 8M13.500 1c3 3 3 9 0 12" /></Ico></Task>
      <Task $w={24}>中</Task>
      <Task $w={34} aria-label="搜狗输入法"><Ico w={15} h={14} c="none"><path d="M0 1l14-1 1 13-13 1z" fill="#e2542c" /><path d="M11 4c-3-1-7-1-7 1s7 1 7 3.500-4 2-7 1" stroke="#fff" strokeWidth="2" /></Ico></Task>
      <Task $w={20} aria-label="电量 43"><svg width="20" height="22" aria-hidden="true"><circle cx="15" cy="11" r="14" fill="#1ea854" /><text x="6" y="15" fontSize="11" fontWeight="700" fontFamily="Noto Sans" fill="#fff">43</text></svg></Task>
    </Tray>
  </Taskbar>
);

export default function App() {
  return (
    <>
      <Global />
      <Screen>
        <Desktop>
          <LeftWindow />
          <RightWindow />
        </Desktop>
        <Bottom />
      </Screen>
    </>
  );
}
